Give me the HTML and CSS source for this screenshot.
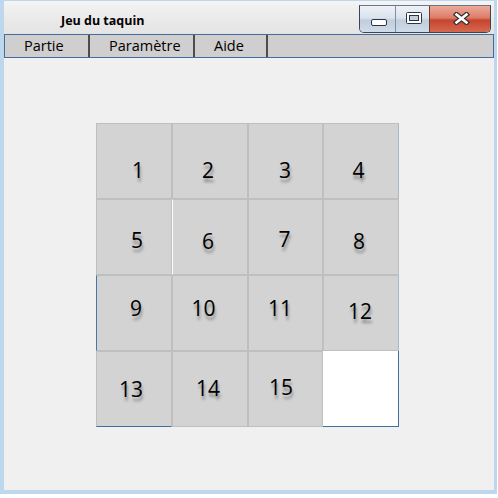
FILE: index.html
```html
<!DOCTYPE html>
<html lang="fr">
<head>
<meta charset="utf-8">
<title>Jeu du taquin</title>
<link rel="stylesheet" href="styles.css">
</head>
<body>
<div class="window">
  <div class="titlebar">
    <span class="title">Jeu du taquin</span>
    <div class="caption-buttons">
      <div class="cbtn cbtn-min">
        <svg class="glyph-min" width="16" height="7" viewBox="0 0 16 7"><rect x="0.5" y="0.5" width="15" height="6" rx="1.5" fill="#fff" stroke="#2b3547"/></svg>
      </div>
      <div class="cbtn cbtn-max">
        <svg class="glyph-max" width="16" height="12" viewBox="0 0 16 12"><rect x="0.5" y="0.5" width="15" height="11" rx="1" fill="#fff" stroke="#2b3547"/><rect x="3.5" y="3.5" width="9" height="5" fill="#c3cfdc" stroke="#2b3547"/></svg>
      </div>
      <div class="cbtn cbtn-close">
        <svg class="glyph-close" width="17" height="13" viewBox="0 0 17 13"><path d="M3.5 2.5 L13.5 10.5 M13.5 2.5 L3.5 10.5" stroke="#3a3131" stroke-width="5" stroke-linecap="square" fill="none"/><path d="M3.5 2.5 L13.5 10.5 M13.5 2.5 L3.5 10.5" stroke="#fff" stroke-width="2.6" stroke-linecap="square" fill="none"/></svg>
      </div>
    </div>
  </div>
  <div class="menubar">
    <div class="menu-item mi-partie">Partie</div>
    <div class="sep"></div>
    <div class="menu-item mi-param">Paramètre</div>
    <div class="sep"></div>
    <div class="menu-item mi-aide">Aide</div>
    <div class="sep"></div>
  </div>
  <div class="content">
    <div class="board">
      <div class="tile t1">1</div>
      <div class="tile t2">2</div>
      <div class="tile t3">3</div>
      <div class="tile t4 edge-right">4</div>
      <div class="tile t5">5</div>
      <div class="tile t6 edge-white-left">6</div>
      <div class="tile t7">7</div>
      <div class="tile t8">8</div>
      <div class="tile t9 edge-blue-left">9</div>
      <div class="tile t10">10</div>
      <div class="tile t11">11</div>
      <div class="tile t12 edge-right">12</div>
      <div class="tile t13 edge-blue-bottom">13</div>
      <div class="tile t14">14</div>
      <div class="tile t15">15</div>
      <div class="tile empty"></div>
    </div>
  </div>
</div>
</body>
</html>
```

FILE: styles.css
```css
html, body {
  margin: 0;
  padding: 0;
  background: #ffffff;
}

.window {
  box-sizing: border-box;
  width: 497px;
  height: 494px;
  background: #bfd7ed;
  padding: 1px 3px 4px 4px;
  display: flex;
  flex-direction: column;
}

.titlebar {
  height: 33px;
  flex: none;
  display: flex;
  align-items: flex-start;
  justify-content: space-between;
  background: linear-gradient(#f4f4f4, #e9e9e9 60%, #e4e4e4);
}

.title {
  margin: 12px 0 0 57px;
  font-family: "Open Sans", "Noto Sans", sans-serif;
  font-weight: bold;
  font-size: 12.5px;
  line-height: 16px;
  color: #000;
}

.caption-buttons {
  display: flex;
  margin: 4px 3px 0 0;
  height: 26px;
  border: 1px solid #3a4658;
  border-top-color: #6a7688;
  border-radius: 0 0 5px 5px;
  overflow: hidden;
}

.cbtn {
  height: 100%;
  display: flex;
  align-items: center;
  justify-content: center;
}

.cbtn-min {
  width: 35px;
  background: linear-gradient(#eef2f7, #dbe3ed 45%, #c0cedd 55%, #cfdbe8);
  border-right: 1px solid #7e8ea3;
  align-items: flex-end;
}

.glyph-min {
  margin: 0 0 6px 2px;
}

.cbtn-max {
  width: 33px;
  background: linear-gradient(#eef2f7, #dbe3ed 45%, #c0cedd 55%, #cfdbe8);
  border-right: 1px solid #6b3a33;
}

.glyph-max {
  margin: 0 0 2px 2px;
}

.cbtn-close {
  width: 60px;
  background: linear-gradient(#ecaa9a, #dc7d68 45%, #c7452f 55%, #d4694f);
}

.glyph-close {
  margin: 0 0 2px 2px;
}

.menubar {
  height: 24px;
  flex: none;
  box-sizing: border-box;
  display: flex;
  background: #d0cece;
  border: 1px solid #3f6fa0;
  font-family: "Open Sans", "Noto Sans", sans-serif;
  font-size: 14.5px;
  line-height: 22px;
  color: #000;
}

.menu-item {
  box-sizing: border-box;
  padding-left: 19px;
  white-space: nowrap;
}

.mi-partie { width: 83px; }
.mi-param { width: 103px; }
.mi-aide { width: 71px; }

.sep {
  width: 2px;
  background: #4d4d4d;
}

.content {
  flex: 1;
  background: #f0f0f0;
  padding: 65px 0 0 92px;
}

.board {
  display: grid;
  grid-template-columns: 76px 76px 75px 76px;
  grid-template-rows: 76px 76px 76px 76px;
}

.tile {
  box-sizing: border-box;
  background: #d3d3d3;
  border: 1px solid #bfbfbf;
  display: flex;
  align-items: center;
  justify-content: center;
  font-family: "Open Sans", "Noto Sans", sans-serif;
  font-size: 21px;
  color: #000;
  text-shadow: 1px 4px 3px rgba(0, 0, 0, 0.35);
}

.edge-right { border-right-color: #a9b9cc; }
.edge-white-left { border-left-color: #ffffff; }
.edge-blue-left { border-left: 1px solid #4777a8; }
.edge-blue-bottom { border-bottom: 1px solid #3f6fa0; }

.empty {
  background: #ffffff;
  border: none;
  border-right: 1px solid #3f6fa0;
  border-bottom: 1px solid #3f6fa0;
}

/* individual number offsets, as in the reference */
.t1 { padding: 18px 0 0 8px; }
.t2 { padding: 18px 4px 0 0; }
.t3 { padding: 18px 1px 0 0; }
.t4 { padding: 18px 5px 0 0; }
.t5 { padding: 6px 0 0 6px; }
.t6 { padding: 8px 4px 0 0; }
.t7 { padding: 4px 2px 0 0; }
.t8 { padding: 7px 4px 0 0; }
.t9 { padding: 0 0 10px 4px; }
.t10 { padding: 0 13px 10px 0; }
.t11 { padding: 0 11px 10px 0; }
.t12 { padding: 0 2px 4px 0; }
.t13 { padding: 0 6px 0 0; }
.t14 { padding: 0 4px 2px 0; }
.t15 { padding: 0 9px 5px 0; }
```
